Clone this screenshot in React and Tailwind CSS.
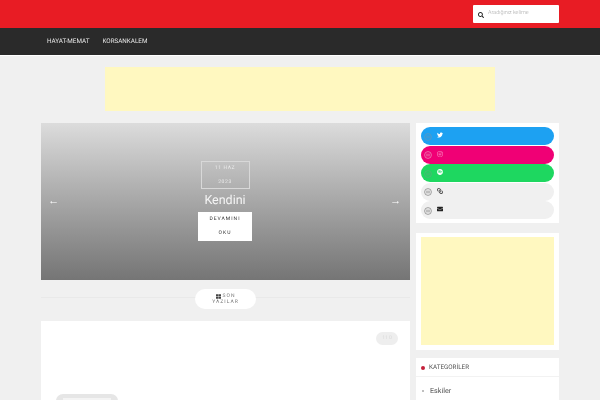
import React from "react";
import { FaTwitter, FaInstagram, FaSpotify, FaLink, FaEnvelope, FaSearch, FaThLarge } from "react-icons/fa";

const socials = [
  { icon: FaTwitter, bg: "bg-[#1da1f2]", fg: "text-white", ring: "text-[#5f97bd]" },
  { icon: FaInstagram, bg: "bg-[#f00075]", fg: "text-[#f8a0cc]", ring: "text-[#e888b8]" },
  { icon: FaSpotify, bg: "bg-[#1ed760]", fg: "text-white", ring: "text-[#55b07a]" },
  { icon: FaLink, bg: "bg-[#f0f0f0]", fg: "text-[#555555] -scale-x-100", ring: "text-[#8a8a8a]" },
  { icon: FaEnvelope, bg: "bg-[#f0f0f0]", fg: "text-[#222222]", ring: "text-[#8a8a8a]" },
];

const Ring = ({ className }) => (
  <svg className={className} width="8" height="8" viewBox="0 0 8 8" fill="none" stroke="currentColor">
    <circle cx="4" cy="4" r="3.4" strokeWidth="0.8" />
    <path d="M2 3.2h4M2 4.8h4" strokeWidth="0.7" />
  </svg>
);

const App = () => {
  return (
    <div className="w-[600px] h-[400px] overflow-hidden bg-[#f0f0f0] font-['Roboto',sans-serif] [text-rendering:geometricPrecision] blur-[0.3px]">
      {/* Top bar */}
      <div className="h-[28px] bg-[#e81c24] flex justify-end pr-[41px] pt-[5px]">
        <div className="w-[86px] h-[18px] bg-white flex items-center pl-[5px] gap-[4px] rounded-[1px]">
          <FaSearch className="w-[6px] h-[6px] text-[#222222] mt-[2px]" />
          <span className="text-[5.5px] font-light text-[#a8a8a8] leading-none">Aradığınız kelime</span>
        </div>
      </div>

      {/* Menu */}
      <div className="h-[27px] bg-[#2a2a2a] flex items-center pl-[47px] gap-[13px] text-[6.3px] text-[#e8e8e8] pt-[1px]">
        <span>HAYAT-MEMAT</span>
        <span>KORSANKALEM</span>
      </div>
      <div className="h-[1px] bg-white" />

      {/* Banner ad */}
      <div className="w-[390px] h-[44px] mx-auto mt-[11px] bg-[#fff8c0]" />

      <div className="flex gap-[6px] mt-[12px] ml-[41px]">
        {/* Main column */}
        <div className="w-[369px] shrink-0">
          <div className="relative h-[157px] bg-gradient-to-b from-[#dcdcdc] to-[#757575] flex flex-col items-center pt-[38px] pr-[1px]">
            <div className="w-[49px] h-[28px] border border-[#d8d8d8] flex flex-col items-center justify-center gap-[9px] text-[5px] tracking-[0.6px] text-[#ececec] leading-none pt-[1px]">
              <span>11 HAZ</span>
              <span>2023</span>
            </div>
            <div className="text-[12.5px] text-[#f5f5f5] leading-none mt-[3px] h-[18px] flex items-center">Kendini</div>
            <div className="w-[54px] h-[29px] bg-white flex flex-col items-center justify-center gap-[9px] text-[5px] tracking-[1px] text-[#333333] leading-none mt-[2px]">
              <span>DEVAMINI</span>
              <span>OKU</span>
            </div>
            <span className="absolute left-[7px] top-[72px] text-[11px] leading-none text-white">←</span>
            <span className="absolute right-[9px] top-[72px] text-[11px] leading-none text-white">→</span>
          </div>

          {/* Section title */}
          <div className="relative h-[41px] flex items-start justify-center pt-[9px]">
            <div className="absolute left-0 right-0 top-[17px] h-[1px] bg-[#e9e9e9]" />
            <div className="relative w-[61px] h-[20px] rounded-full bg-white flex flex-col items-center justify-center text-[5px] tracking-[1px] text-[#777777] leading-[6px]">
              <span className="flex items-center gap-[2px]">
                <FaThLarge className="w-[5px] h-[5px] text-[#444444]" />
                SON
              </span>
              <span>YAZILAR</span>
            </div>
          </div>

          {/* Post card */}
          <div className="relative h-[80px] bg-white">
            <div className="absolute right-[12px] top-[11px] w-[22px] h-[13px] rounded-full bg-[#eeeeee] flex items-center justify-center text-[5px] text-[#d8d8d8]">
              11 0
            </div>
            <div className="absolute left-[15px] top-[73px] w-[62px] h-[14px] rounded-full bg-[#e6e6e6] px-[7px] pt-[4px]">
              <div className="h-[3px] bg-[#f4f4f4]" />
            </div>
          </div>
        </div>

        {/* Sidebar */}
        <div className="w-[143px] shrink-0 flex flex-col">
          <div className="h-[100px] bg-white px-[5px] pt-[4px] flex flex-col gap-[0.5px]">
            {socials.map(({ icon: Icon, bg, fg, ring }, i) => (
              <div key={i} className={`${bg} h-[18px] rounded-full flex items-start`}>
                <Ring className={`${ring} ml-[3px] mt-[5.5px]`} />
                <Icon className={`${fg} w-[6px] h-[6px] ml-[5px] mt-[5px]`} />
              </div>
            ))}
          </div>

          <div className="h-[117px] bg-white mt-[10px] px-[5px] pt-[4px]">
            <div className="h-[108px] bg-[#fff8c0]" />
          </div>

          <div className="h-[60px] bg-white mt-[8px]">
            <div className="h-[19px] flex items-center border-b border-[#f2f2f2] pl-[5px] pt-[1px] gap-[3px] text-[6.3px] text-[#555555]">
              <span className="w-[4px] h-[4px] rounded-full bg-[#c4203a]" />
              <span className="ml-[1px]">KATEGORİLER</span>
            </div>
            <div className="flex items-center pl-[6px] mt-[7px] h-[14px] text-[7.2px] text-[#555555]">
              <span className="w-[2px] h-[2px] rounded-full bg-[#aaaaaa] mr-[6px]" />
              Eskiler
            </div>
          </div>
        </div>
      </div>
    </div>
  );
};

export default App;
